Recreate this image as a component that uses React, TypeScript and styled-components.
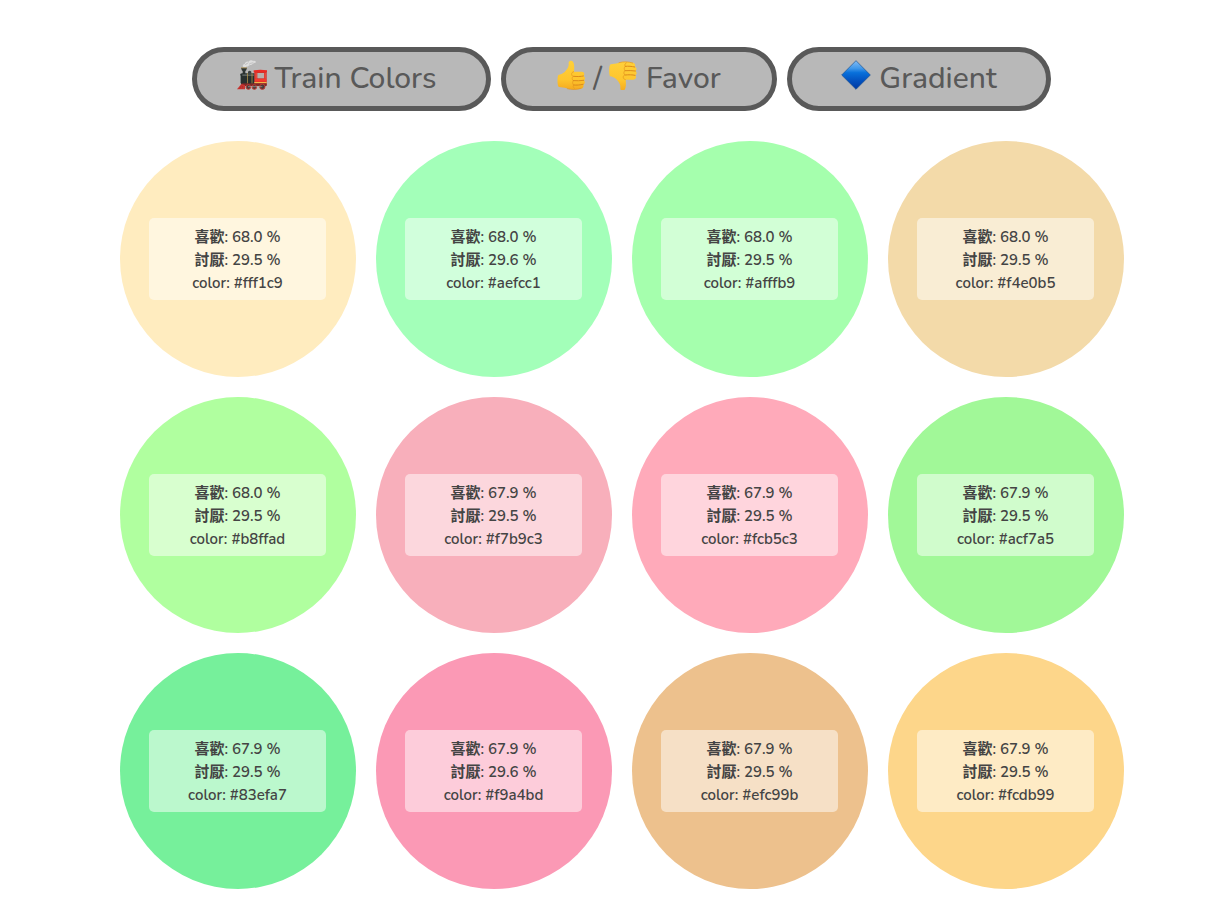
import React from "react";
import styled, { createGlobalStyle } from "styled-components";

const GlobalStyle = createGlobalStyle`
  * { box-sizing: border-box; }
  body {
    margin: 0;
    background: #ffffff;
    color: #444444;
    font-family: Nunito, Lato, "Noto Sans CJK TC", sans-serif;
  }
`;

const Page = styled.main`
  padding: 47px 0 12px 32px;
`;

const Toolbar = styled.nav`
  display: flex;
  flex-wrap: wrap;
  justify-content: center;
  gap: 10px;
  margin-bottom: 30px;
  padding-right: 1px;
`;

const PillButton = styled.button<{ $width: number; $shift?: boolean }>`
  display: flex;
  align-items: center;
  justify-content: center;
  width: ${(p) => p.$width}px;
  height: 64px;
  padding: 0 ${(p) => (p.$shift ? 10 : 0)}px 0 0;
  border: 5px solid #595959;
  border-radius: 32px;
  background: #b8b8b8;
  color: #595959;
  font-family: inherit;
  font-size: 30px;
  font-weight: 500;
  line-height: 40px;
  white-space: pre;
  cursor: pointer;
`;

const Icon = styled.svg`
  flex: none;
  width: 30px;
  height: 30px;
  margin-bottom: 8px;
`;

const Caption = styled.span`
  margin-left: 8px;
`;

const Slash = styled.span`
  margin: 0 6px;
`;

const Swatches = styled.ul`
  display: flex;
  flex-wrap: wrap;
  justify-content: center;
  gap: 20px;
  max-width: 1024px;
  margin: 0 auto;
  padding: 0;
  list-style: none;
`;

const Swatch = styled.li<{ $fill: string }>`
  display: flex;
  align-items: center;
  justify-content: center;
  width: 236px;
  height: 236px;
  padding-right: 1px;
  border-radius: 50%;
  background: ${(p) => p.$fill};
`;

const Info = styled.div`
  width: 177px;
  padding: 8px 0 5px;
  border-radius: 5px;
  background: rgba(255, 255, 255, 0.5);
  font-size: 15px;
  font-weight: 600;
  line-height: 23px;
  text-align: center;
`;

const Line = styled.p`
  margin: 0;
`;

const TrainIcon = () => (
  <Icon viewBox="0 0 90 90" aria-hidden="true">
    <path d="M19 21c-4-6 1-9 4-9 1-6 7-9 12-7 4-5 11-5 13-2 5-2 9 1 9 4-3 3-8 2-10 5-4 4-9 2-12 5-3 4-8 1-9 5z" fill="#dedede" />
    <path d="M25 15c2-5 7-4 9-7M36 13c4-5 9-2 13-6" fill="none" stroke="#b0b0b0" strokeWidth="2" />
    <path d="M12 24h18l-3 8h-2v12h-8V32h-2z" fill="#2f3635" />
    <path d="M12 22h18v3H12z" fill="#a8905a" />
    <path d="M33 40v-5q5-6 10 0v5z" fill="#3c4240" />
    <path d="M9 46q0-6 6-6h38v34H14q-5-4-5-28z" fill="#28302f" />
    <path d="M16 43h36v5H16z" fill="#59615f" />
    <path d="M30 40h2v31h-2zM44 40h2v31h-2z" fill="#c8a14b" />
    <path d="M9 46h3v20H9z" fill="#7e8684" />
    <path d="M52 35h37v40H52z" fill="#cf2f28" />
    <path d="M50 31q20-4 40 0v6H50z" fill="#ea2a24" />
    <path d="M61 39h20v16H61z" fill="#b9aeaa" />
    <path d="M55 38h5v18h-5zM82 38h5v18h-5z" fill="#e8483d" />
    <path d="M54 57h34v8H54z" fill="#f5392d" />
    <path d="M52 66h37v4H52z" fill="#f0b64b" />
    <path d="M14 70h75v8H14z" fill="#7b2a28" />
    <path d="M13 72 0 88h24V75z" fill="#c93430" />
    <path d="m13 77-5 10m9-9-2 9" stroke="#7c2422" strokeWidth="1" />
    <g fill="#4a3b3a" stroke="#c23a33" strokeWidth="3">
      <circle cx="34" cy="81" r="7" />
      <circle cx="52" cy="81" r="7" />
      <circle cx="76" cy="80" r="8" />
    </g>
    <path d="M33 80h43" stroke="#a8a19d" strokeWidth="2" />
  </Icon>
);

const ThumbIcon = ({ down = false }: { down?: boolean }) => {
  const id = down ? "thumb-down" : "thumb-up";
  return (
    <Icon viewBox="0 0 90 90" aria-hidden="true">
      <defs>
        <linearGradient id={id} x1="0" y1={down ? "1" : "0"} x2="0" y2={down ? "0" : "1"}>
          <stop offset="0" stopColor="#ffd03a" />
          <stop offset="0.65" stopColor="#fec52d" />
          <stop offset="1" stopColor="#f5ab20" />
        </linearGradient>
      </defs>
      <g transform={down ? "matrix(1 0 0 -1 2 92)" : "translate(0 2)"}>
        <path
          d="M35 5c1-5 9-7 13-2 5 7 4 20 3 30h24c7 0 9 9 5 13 5 3 5 10 1 13 4 4 3 11-2 13 2 5 0 11-7 12-14 3-31 4-43-1-8-3-15-2-23-4-5-1-6-27-2-36 6-1 14-4 19-9 6-6 11-13 12-20z"
          fill={`url(#${id})`}
        />
        <path
          d="M51 33c-5 1-8 4-7 9 0 3 2 4 5 5-5 3-4 10 0 13-3 4-3 10 1 13-3 4-1 9 4 11"
          fill="none"
          stroke="#eda322"
          strokeWidth="3"
        />
        <path
          d="M50 47c10 1 21 1 29-1M49 60c10 1 21 0 31-1M50 73c9 1 19 0 28-2"
          fill="none"
          stroke="#dc8a1b"
          strokeWidth="3"
          strokeLinecap="round"
        />
        <path d="M31 84c14 4 30 3 41-1" fill="none" stroke="#e39422" strokeWidth="2" strokeLinecap="round" />
      </g>
    </Icon>
  );
};

const DiamondIcon = () => (
  <Icon viewBox="0 0 90 90" aria-hidden="true">
    <defs>
      <linearGradient id="diamond" x1="0" y1="0" x2="0" y2="1">
        <stop offset="0" stopColor="#83bdf5" />
        <stop offset="0.27" stopColor="#3f97ea" />
        <stop offset="0.42" stopColor="#0870db" />
        <stop offset="0.65" stopColor="#0456c4" />
        <stop offset="1" stopColor="#0038a0" />
      </linearGradient>
    </defs>
    <path d="M45 2 88 45 45 88 2 45z" fill="url(#diamond)" stroke="#174e8e" strokeWidth="2" strokeLinejoin="round" />
  </Icon>
);

interface ColorItem {
  fill: string;
  name: string;
  like: string;
  dislike: string;
}

const colors: ColorItem[] = [
  { fill: "#ffecbf", name: "#fff1c9", like: "68.0", dislike: "29.5" },
  { fill: "#a3ffb9", name: "#aefcc1", like: "68.0", dislike: "29.6" },
  { fill: "#a5ffad", name: "#afffb9", like: "68.0", dislike: "29.5" },
  { fill: "#f3daa9", name: "#f4e0b5", like: "68.0", dislike: "29.5" },
  { fill: "#b0ff9f", name: "#b8ffad", like: "68.0", dislike: "29.5" },
  { fill: "#f8afbb", name: "#f7b9c3", like: "67.9", dislike: "29.5" },
  { fill: "#ffaaba", name: "#fcb5c3", like: "67.9", dislike: "29.5" },
  { fill: "#a1f898", name: "#acf7a5", like: "67.9", dislike: "29.5" },
  { fill: "#76f09b", name: "#83efa7", like: "67.9", dislike: "29.5" },
  { fill: "#fb99b5", name: "#f9a4bd", like: "67.9", dislike: "29.6" },
  { fill: "#edc18d", name: "#efc99b", like: "67.9", dislike: "29.5" },
  { fill: "#fdd68a", name: "#fcdb99", like: "67.9", dislike: "29.5" },
];

export default function App() {
  return (
    <>
      <GlobalStyle />
      <Page>
        <Toolbar>
          <PillButton type="button" $width={299} $shift>
            <TrainIcon />
            <Caption>Train Colors</Caption>
          </PillButton>
          <PillButton type="button" $width={276}>
            <ThumbIcon />
            <Slash>/</Slash>
            <ThumbIcon down />
            <Caption>Favor</Caption>
          </PillButton>
          <PillButton type="button" $width={264}>
            <DiamondIcon />
            <Caption>Gradient</Caption>
          </PillButton>
        </Toolbar>
        <Swatches>
          {colors.map((c) => (
            <Swatch key={c.name} $fill={c.fill}>
              <Info>
                <Line>喜歡: {c.like} %</Line>
                <Line>討厭: {c.dislike} %</Line>
                <Line>color: {c.name}</Line>
              </Info>
            </Swatch>
          ))}
        </Swatches>
      </Page>
    </>
  );
}
